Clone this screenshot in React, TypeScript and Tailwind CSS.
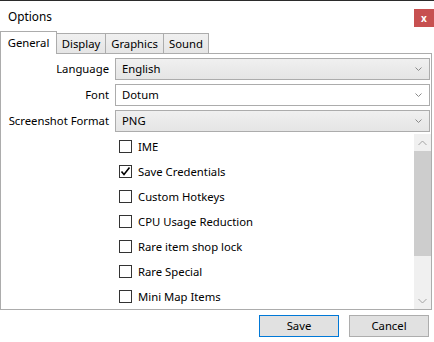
import React from "react";

const font = { fontFamily: '"Noto Sans", "Open Sans", Arial, sans-serif' };

function Chevron({ up = false, color = "#7a7a7a" }: { up?: boolean; color?: string }) {
  return (
    <svg width="9" height="6" viewBox="0 0 9 6" className="block">
      <path
        d={up ? "M0.5 5 L4.5 1 L8.5 5" : "M0.5 1 L4.5 5 L8.5 1"}
        fill="none"
        stroke={color}
        strokeWidth="1"
      />
    </svg>
  );
}

function SmallChevron() {
  return (
    <svg width="7" height="4" viewBox="0 0 7 4" className="block">
      <path d="M0.5 0.5 L3.5 3.5 L6.5 0.5" fill="none" stroke="#8a8a8a" strokeWidth="1" />
    </svg>
  );
}

function Combo({ value, white = false }: { value: string; white?: boolean }) {
  return (
    <div
      className={
        "ml-[6px] w-[315px] h-[22px] border border-[#acacac] flex items-center pl-[6px] pr-[7px] " +
        (white ? "bg-white" : "bg-linear-to-b from-[#f0f0f0] to-[#e5e5e5]")
      }
    >
      <span className="flex-1 text-black">{value}</span>
      <SmallChevron />
    </div>
  );
}

function Row({ label, value, white }: { label: string; value: string; white?: boolean }) {
  return (
    <div className="flex items-center h-[22px]">
      <div className="w-[108px] text-right text-black whitespace-nowrap">{label}</div>
      <Combo value={value} white={white} />
    </div>
  );
}

function Check({ label, checked = false }: { label: string; checked?: boolean }) {
  return (
    <div className="h-[25px] flex items-center pl-[118px]">
      <div className="w-[13px] h-[13px] border border-[#333333] bg-white relative">
        {checked && (
          <svg width="11" height="11" viewBox="0 0 11 11" className="absolute left-0 top-0">
            <path d="M1.5 5.5 L4 8.5 L9.5 1.5" fill="none" stroke="#000" strokeWidth="1.6" />
          </svg>
        )}
      </div>
      <span className="ml-[6px] text-black">{label}</span>
    </div>
  );
}

export default function App() {
  const items = [
    { label: "IME" },
    { label: "Save Credentials", checked: true },
    { label: "Custom Hotkeys" },
    { label: "CPU Usage Reduction" },
    { label: "Rare item shop lock" },
    { label: "Rare Special" },
    { label: "Mini Map Items" },
  ];
  return (
    <div
      className="w-[434px] h-[342px] bg-white border-t border-[#2b2b2b] flex flex-col relative overflow-hidden text-[11.3px] leading-[16px]"
      style={font}
    >
      {/* title bar */}
      <div className="h-[30px] relative">
        <div className="pl-[8px] pt-[7px] text-[11.8px] text-black">Options</div>
        <div className="absolute left-[414px] top-[8px] w-[20px] h-[18px] bg-[#c75050] flex items-center justify-center text-white text-[10px] font-bold leading-none">
          x
        </div>
      </div>

      {/* tabs */}
      <div className="h-[22px] flex items-end relative z-10">
        <div className="w-[57px] h-[23px] mb-[-1px] bg-white border border-b-0 border-[#acacac] flex items-center justify-center text-black">
          General
        </div>
        <div className="ml-[-1px] w-[50px] h-[20px] bg-linear-to-b from-[#f0f0f0] to-[#e5e5e5] border border-b-0 border-[#acacac] flex items-center justify-center text-black">
          Display
        </div>
        <div className="ml-[-1px] w-[59px] h-[20px] bg-linear-to-b from-[#f0f0f0] to-[#e5e5e5] border border-b-0 border-[#acacac] flex items-center justify-center text-black">
          Graphics
        </div>
        <div className="ml-[-1px] w-[46px] h-[20px] bg-linear-to-b from-[#f0f0f0] to-[#e5e5e5] border border-b-0 border-[#acacac] flex items-center justify-center text-black">
          Sound
        </div>
      </div>

      {/* panel */}
      <div className="w-[432px] h-[257px] border border-[#acacac] flex flex-col">
        <div className="pt-[4px] flex flex-col gap-[4px]">
          <Row label="Language" value="English" />
          <Row label="Font" value="Dotum" white />
          <Row label="Screenshot Format" value="PNG" />
        </div>
        <div className="mt-[2px] flex-1 flex min-h-0">
          <div className="flex-1 overflow-hidden">
            {items.map((it) => (
              <Check key={it.label} label={it.label} checked={it.checked} />
            ))}
          </div>
          <div className="w-[17px] bg-[#f0f0f0] flex flex-col">
            <div className="h-[17px] flex items-center justify-center">
              <Chevron up color="#a3a3a3" />
            </div>
            <div className="h-[105px] bg-[#cdcdcd]" />
            <div className="flex-1" />
            <div className="h-[17px] flex items-center justify-center">
              <Chevron color="#a3a3a3" />
            </div>
          </div>
        </div>
      </div>

      {/* buttons */}
      <div className="flex justify-end gap-[10px] pr-[5px] pt-[5px]">
        <div className="w-[80px] h-[22px] bg-[#e1e1e1] border border-[#0078d7] flex items-center justify-center text-black">
          Save
        </div>
        <div className="w-[80px] h-[22px] bg-[#e1e1e1] border border-[#adadad] flex items-center justify-center text-black">
          Cancel
        </div>
      </div>
    </div>
  );
}
